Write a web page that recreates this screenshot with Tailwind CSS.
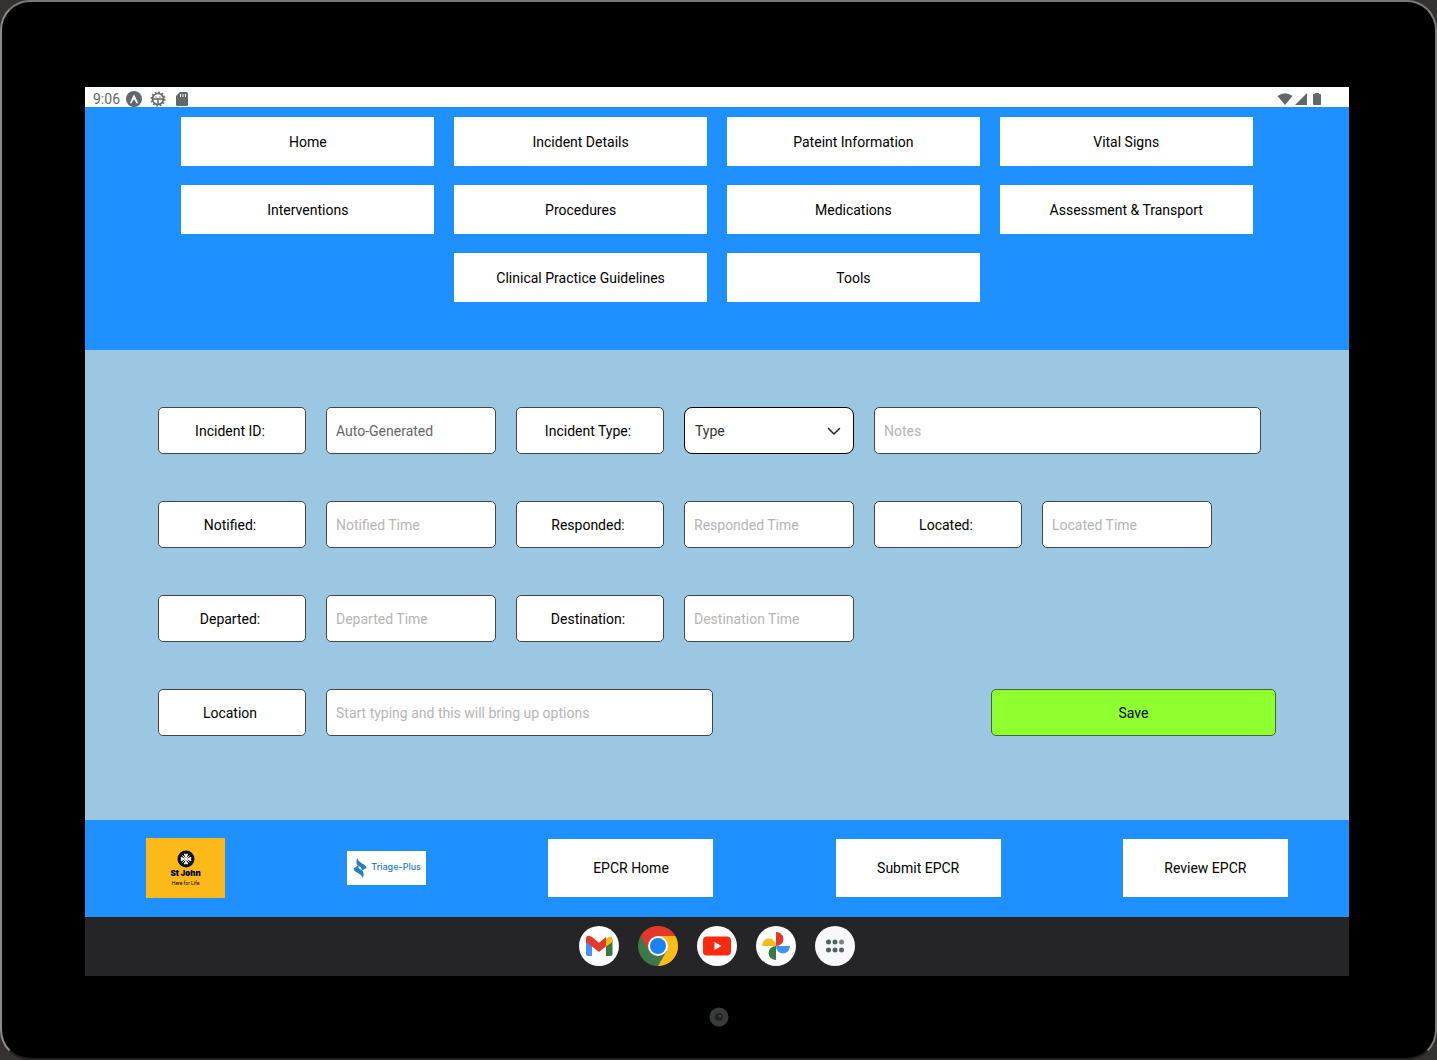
<!DOCTYPE html>
<html lang="en">
<head>
<meta charset="utf-8">
<meta name="viewport" content="width=device-width, initial-scale=1">
<title>EPCR - Incident Details</title>
<script src="https://cdn.jsdelivr.net/npm/@tailwindcss/browser@4"></script>
</head>
<body class="bg-[#353130] font-['Roboto',sans-serif] text-sm text-black">
<div class="flex min-h-screen flex-col rounded-[30px] border-2 border-t-[#77787a] border-r-[#7c7c7c] border-b-[#202020] border-l-[#8c8c8c] bg-black px-[83px] pt-[85px]">
  <div class="mr-[3px] flex flex-1 flex-col">

    <!-- Status bar -->
    <header class="flex h-5 items-center justify-between bg-white pt-1 pr-6 pl-2 text-[#62676a]">
      <div class="flex items-center gap-1.5">
        <time>9:06</time>
        <svg class="size-4" viewBox="0 0 16 16"><circle cx="8" cy="8" r="8" fill="#62676a"/><path d="M4 12 7.2 4.7q.8-1.4 1.6 0L12 12q-1 1-1.8-.3L8 8l-2.2 3.7Q5 13 4 12z" fill="#fff"/></svg>
        <svg class="ml-0.5 size-4" viewBox="0 0 16 16" fill="none" stroke="#62676a"><circle cx="8" cy="8" r="5.5" stroke-width="1.6"/><circle cx="8" cy="8" r="6.800" stroke-width="1.400" stroke-dasharray="1.780 1.780"/><path d="M3 8h10M8 8v5M6 5.5v1M10 5.5v1" stroke-width="1.5"/></svg>
        <svg class="ml-0.5 size-4" viewBox="0 0 16 16"><path d="M6 1h6.500q1.500 0 1.500 1.500v11q0 1.500-1.500 1.500h-9q-1.500 0-1.500-1.500V5z" fill="#62676a"/><path d="M6.500 3v3M9 3v3M11.500 3v3" stroke="#fff"/></svg>
      </div>
      <div class="flex items-center gap-0.5">
        <svg class="h-3 w-4" viewBox="0 0 16 12" fill="#62676a"><path d="M.5 3Q8-2.500 15.500 3L8 12z"/></svg>
        <svg class="h-3 w-3" viewBox="0 0 12 12" fill="#62676a"><path d="M12 0v12H0z"/></svg>
        <svg class="h-3 w-4" viewBox="0 0 16 12" fill="#62676a"><path d="M6 0h4v1h1q1 0 1 1v9q0 1-1 1H5q-1 0-1-1V2q0-1 1-1h1z"/></svg>
      </div>
    </header>

    <!-- Section navigation -->
    <nav class="flex flex-wrap justify-center gap-x-5 gap-y-[19px] bg-[#1e90ff] pt-2.5 pb-12">
      <button class="h-[49px] w-1/5 bg-white">Home</button>
      <button class="h-[49px] w-1/5 bg-white">Incident Details</button>
      <button class="h-[49px] w-1/5 bg-white">Pateint Information</button>
      <button class="h-[49px] w-1/5 bg-white">Vital Signs</button>
      <button class="h-[49px] w-1/5 bg-white">Interventions</button>
      <button class="h-[49px] w-1/5 bg-white">Procedures</button>
      <button class="h-[49px] w-1/5 bg-white">Medications</button>
      <button class="h-[49px] w-1/5 bg-white">Assessment &amp; Transport</button>
      <button class="h-[49px] w-1/5 bg-white">Clinical Practice Guidelines</button>
      <button class="h-[49px] w-1/5 bg-white">Tools</button>
    </nav>

    <!-- Incident form -->
    <form class="flex flex-1 flex-col gap-[47px] bg-[#9cc7e2] px-[73px] pt-[57px] pb-12">
      <div class="flex gap-5">
        <label for="incident-id" class="flex h-[47px] w-[148px] shrink-0 items-center justify-center rounded-[5px] border border-[#444] bg-white pr-1">Incident ID:</label>
        <input id="incident-id" value="Auto-Generated" readonly class="h-[47px] w-[170px] rounded-[5px] border border-[#444] bg-white px-[9px] text-[#666]">
        <label for="incident-type" class="flex h-[47px] w-[148px] shrink-0 items-center justify-center rounded-[5px] border border-[#444] bg-white pr-1">Incident Type:</label>
        <div class="relative w-[170px]">
          <select id="incident-type" class="h-[47px] w-full appearance-none rounded-[8px] border border-black bg-white px-2.5 text-[#333]"><option>Type</option></select>
          <svg class="pointer-events-none absolute top-1/2 right-3 h-4 w-4 -translate-y-1/2" viewBox="0 0 16 16" fill="none" stroke="#222" stroke-width="1.500" stroke-linecap="round" stroke-linejoin="round"><path d="m2.500 5.500 5.500 5.500 5.500-5.500"/></svg>
        </div>
        <input aria-label="Notes" placeholder="Notes" class="h-[47px] w-[387px] rounded-[5px] border border-[#444] bg-white px-[9px] placeholder:text-[#b5b5b5]">
      </div>
      <div class="flex gap-5">
        <label for="notified" class="flex h-[47px] w-[148px] shrink-0 items-center justify-center rounded-[5px] border border-[#444] bg-white pr-1">Notified:</label>
        <input id="notified" placeholder="Notified Time" class="h-[47px] w-[170px] rounded-[5px] border border-[#444] bg-white px-[9px] placeholder:text-[#b5b5b5]">
        <label for="responded" class="flex h-[47px] w-[148px] shrink-0 items-center justify-center rounded-[5px] border border-[#444] bg-white pr-1">Responded:</label>
        <input id="responded" placeholder="Responded Time" class="h-[47px] w-[170px] rounded-[5px] border border-[#444] bg-white px-[9px] placeholder:text-[#b5b5b5]">
        <label for="located" class="flex h-[47px] w-[148px] shrink-0 items-center justify-center rounded-[5px] border border-[#444] bg-white pr-1">Located:</label>
        <input id="located" placeholder="Located Time" class="h-[47px] w-[170px] rounded-[5px] border border-[#444] bg-white px-[9px] placeholder:text-[#b5b5b5]">
      </div>
      <div class="flex gap-5">
        <label for="departed" class="flex h-[47px] w-[148px] shrink-0 items-center justify-center rounded-[5px] border border-[#444] bg-white pr-1">Departed:</label>
        <input id="departed" placeholder="Departed Time" class="h-[47px] w-[170px] rounded-[5px] border border-[#444] bg-white px-[9px] placeholder:text-[#b5b5b5]">
        <label for="destination" class="flex h-[47px] w-[148px] shrink-0 items-center justify-center rounded-[5px] border border-[#444] bg-white pr-1">Destination:</label>
        <input id="destination" placeholder="Destination Time" class="h-[47px] w-[170px] rounded-[5px] border border-[#444] bg-white px-[9px] placeholder:text-[#b5b5b5]">
      </div>
      <div class="flex gap-5">
        <label for="location" class="flex h-[47px] w-[148px] shrink-0 items-center justify-center rounded-[5px] border border-[#444] bg-white pr-1">Location</label>
        <input id="location" placeholder="Start typing and this will bring up options" class="h-[47px] w-[387px] rounded-[5px] border border-[#444] bg-white px-[9px] placeholder:text-[#b5b5b5]">
        <button type="button" class="ml-auto h-[47px] w-[285px] rounded-[5px] border border-[#47672f] bg-[#90ff2f]">Save</button>
      </div>
    </form>

    <!-- Footer actions -->
    <footer class="flex h-[97px] items-center justify-around bg-[#1e90ff] pb-0.5">
      <div class="flex h-[60px] w-[79px] flex-col items-center bg-[#fdb91a] pt-3 text-black">
        <svg class="size-[18px] shrink-0" viewBox="0 0 18 18"><circle cx="9" cy="9" r="8.500" fill="#111"/><g fill="#fff"><path id="arm" d="M9 9 6.800 4 8 3.600l1 .8 1-.8 1.200.4z"/><use href="#arm" transform="rotate(90 9 9)"/><use href="#arm" transform="rotate(180 9 9)"/><use href="#arm" transform="rotate(270 9 9)"/></g><path d="m5.500 5.500 7 7M12.500 5.500l-7 7" stroke="#fff" stroke-width="1"/></svg>
        <span class="font-['Inter'] text-[8px]/[10px] font-black whitespace-nowrap">St John</span>
        <span class="mt-px text-[5px]/[8px] whitespace-nowrap">Here for Life</span>
      </div>
      <div class="flex h-[34px] w-[79px] items-center gap-1 bg-white pl-1.5 text-[#287dc7]">
        <svg class="h-5 w-3.5 shrink-0" viewBox="0 0 14 20" fill="#287dc7"><path d="M4 0q1 3 5 5.500 4.500 2 4.500 4.500L8 13q1.500-3-1.500-4.500Q2 7 4 0z"/><path d="M10 20Q9 17 5 15 .5 13 .5 10.500L6 7q-1.500 3 1.500 4.500Q12 13 10 20z"/></svg>
        <span class="font-['Inter'] text-[9px] font-medium whitespace-nowrap">Triage-Plus</span>
      </div>
      <button class="h-[58px] w-[165px] bg-white">EPCR Home</button>
      <button class="h-[58px] w-[165px] bg-white">Submit EPCR</button>
      <button class="h-[58px] w-[165px] bg-white">Review EPCR</button>
    </footer>

    <!-- System dock -->
    <div class="flex h-[59px] items-center justify-center gap-[19px] bg-[#252527] pb-0.5">
      <button aria-label="Gmail"><svg class="size-10" viewBox="0 0 40 40"><circle cx="20" cy="20" r="20" fill="#fff"/><path d="M7 13.500V28q0 2 2 2h4V18z" fill="#4193f5"/><path d="M27 18v12h4.500q2 0 2-2V13.500z" fill="#397844"/><path d="M27 13q6.500-5.500 6.500 0v3L27 20.500z" fill="#fdb917"/><path d="M7 16v-3q0-5.500 6-2l7 5.800 7-5.800v9.500L20 26l-7-5.500z" fill="#e43a2b"/></svg></button>
      <button aria-label="Chrome"><svg class="size-10" viewBox="0 0 40 40"><circle cx="20" cy="20" r="20" fill="#3f7849"/><path d="M2.700 10A20 20 0 0 1 37.300 10H20L11.300 25z" fill="#e43629"/><path d="M37.300 10A20 20 0 0 1 20 40L28.700 25 20 10z" fill="#fdbb18"/><circle cx="20" cy="20" r="10" fill="#fff"/><circle cx="20" cy="20" r="8" fill="#1a83f5"/></svg></button>
      <button aria-label="YouTube"><svg class="size-10" viewBox="0 0 40 40"><circle cx="20" cy="20" r="20" fill="#fff"/><rect x="6" y="10.500" width="28" height="19" rx="4" fill="#fc2810"/><path d="m17.500 16 7 4-7 4z" fill="#fff"/></svg></button>
      <button aria-label="Photos"><svg class="size-10" viewBox="0 0 40 40"><circle cx="20" cy="20" r="20" fill="#fff"/><path d="M20 6a7.500 7 0 0 1 0 14z" fill="#e43629"/><path d="M34 20a7 7.500 0 0 1-14 0z" fill="#4193f5"/><path d="M20 34a7.500 7 0 0 1 0-14z" fill="#397844"/><path d="M6 20a7 7.500 0 0 1 14 0z" fill="#fdbb18"/></svg></button>
      <button aria-label="All apps"><svg class="size-10" viewBox="0 0 40 40"><circle cx="20" cy="20" r="20" fill="#f8f7fc"/><g fill="#566064"><circle cx="13.500" cy="16" r="2.500"/><circle cx="20" cy="16" r="2.500"/><circle cx="26.500" cy="16" r="2.500" fill="#7b8185"/><circle cx="13.500" cy="24" r="2.500"/><circle cx="20" cy="24" r="2.500"/><circle cx="26.500" cy="24" r="2.500"/></g></svg></button>
    </div>
  </div>

  <!-- Camera -->
  <div class="flex h-[82px] items-center justify-center">
    <svg class="size-5" viewBox="0 0 20 20"><circle cx="10" cy="10" r="9.500" fill="#393b3b"/><circle cx="10" cy="10" r="4" fill="#1e2123"/><circle cx="11" cy="9" r="1.300" fill="#43484b"/></svg>
  </div>
</div>
</body>
</html>
